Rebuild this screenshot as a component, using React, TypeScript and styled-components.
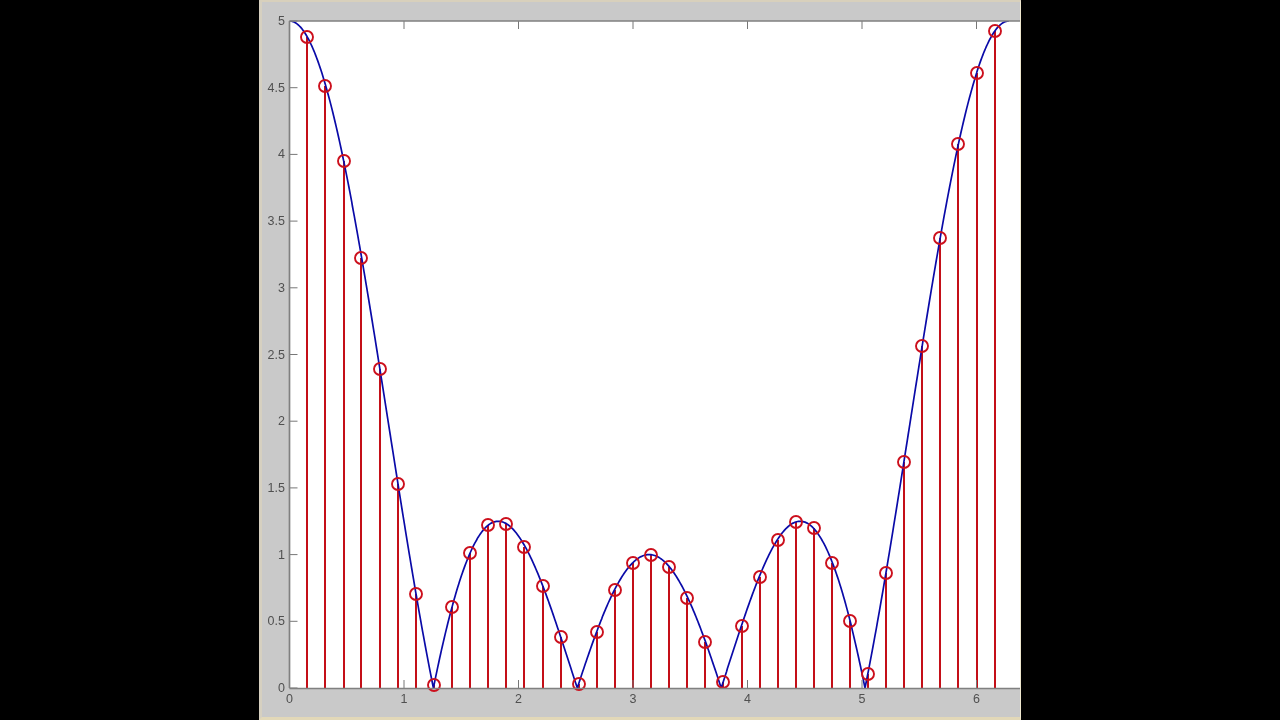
import React from "react";
import styled, { createGlobalStyle } from "styled-components";

const Global = createGlobalStyle`
  html, body { margin: 0; padding: 0; background: #000; }
  #root { width: 1280px; height: 720px; }
`;

const Stage = styled.div`
  width: 1280px;
  height: 720px;
  background: #000;
  display: flex;
  justify-content: center;
  overflow: hidden;
`;

const FigureWindow = styled.div`
  width: 762px;
  height: 720px;
  box-sizing: border-box;
  background: #c9c9c9;
  border-top: 2px solid #d8d0bc;
  border-left: 3px solid #d6d0c0;
  border-bottom: 3px solid #e2d8b8;
  border-right: 1px solid #efe8cf;
  display: flex;
`;

const Chart = styled.svg`
  display: block;
  width: 758px;
  height: 715px;
  flex: none;
  filter: blur(0.35px);
`;

const Tick = styled.text`
  font-family: "Liberation Sans", Arial, sans-serif;
  font-size: 12.5px;
  fill: #505050;
`;

// Page coordinates; the svg is shifted by the window's borders.
const OX = 262;
const OY = 2;
const L = 289.5;
const T = 21;
const R = 1020;
const B = 688;
const xOf = (w: number) => L + 114.5 * w;
const yOf = (v: number) => B - 133.4 * v;

const samples: [number, number][] = [
  [307, 37], [325, 86], [344, 161], [361, 258], [380, 369], [398, 484], [416, 594], [434, 685],
  [452, 607], [470, 553], [488, 525], [506, 524], [524, 547], [543, 586], [561, 637], [579, 684],
  [597, 632], [615, 590], [633, 563], [651, 555], [669, 567], [687, 598], [705, 642], [723, 682],
  [742, 626], [760, 577], [778, 540], [796, 522], [814, 528], [832, 563], [850, 621], [868, 674],
  [886, 573], [904, 462], [922, 346], [940, 238], [958, 144], [977, 73], [995, 31],
];

const curve = (() => {
  const pts: string[] = [];
  for (let i = 0; i <= 800; i++) {
    const w = (i / 800) * 2 * Math.PI;
    const d = Math.abs(Math.sin(w / 2)) < 1e-6 ? 5 : Math.abs(Math.sin((5 * w) / 2) / Math.sin(w / 2));
    pts.push(`${xOf(w).toFixed(1)},${yOf(d).toFixed(1)}`);
  }
  return pts.join(" ");
})();

const xTicks = [0, 1, 2, 3, 4, 5, 6];
const yTicks = [0, 0.5, 1, 1.5, 2, 2.5, 3, 3.5, 4, 4.5, 5];

export default function App() {
  return (
    <Stage>
      <Global />
      <FigureWindow>
        <Chart viewBox={`${OX} ${OY} 758 715`}>
          <defs>
            <clipPath id="plot">
              <rect x={L} y={T} width={R - L + 1} height={B - T} />
            </clipPath>
          </defs>
          <rect x={L} y={T} width={R - L + 2} height={B - T} fill="#ffffff" />
          {samples.map(([x, y]) => (
            <line key={x} x1={x} x2={x} y1={y} y2={B} stroke="#c40f18" strokeWidth={2} />
          ))}
          <polyline points={curve} fill="none" stroke="#0a0aa8" strokeWidth={1.7} clipPath="url(#plot)" />
          {samples.map(([x, y]) => (
            <circle key={x} cx={x} cy={y} r={6} fill="none" stroke="#cc0f1c" strokeWidth={1.9} />
          ))}
          {xTicks.map((t) => (
            <g key={t}>
              <line x1={xOf(t)} x2={xOf(t)} y1={B} y2={B - 8} stroke="#777" />
              <line x1={xOf(t)} x2={xOf(t)} y1={T} y2={T + 8} stroke="#777" />
              <Tick x={xOf(t)} y={703} textAnchor="middle">{t}</Tick>
            </g>
          ))}
          {yTicks.map((t) => (
            <g key={t}>
              <line x1={L} x2={L + 8} y1={yOf(t)} y2={yOf(t)} stroke="#777" />
              <Tick x={285} y={yOf(t) + 4} textAnchor="end">{t}</Tick>
            </g>
          ))}
          <path d={`M${L} ${T}H${R + 1}M${L} ${B + 0.5}H${R + 1}M${L} ${T}V${B}`} stroke="#808080" strokeWidth={1.7} fill="none" />
        </Chart>
      </FigureWindow>
    </Stage>
  );
}
